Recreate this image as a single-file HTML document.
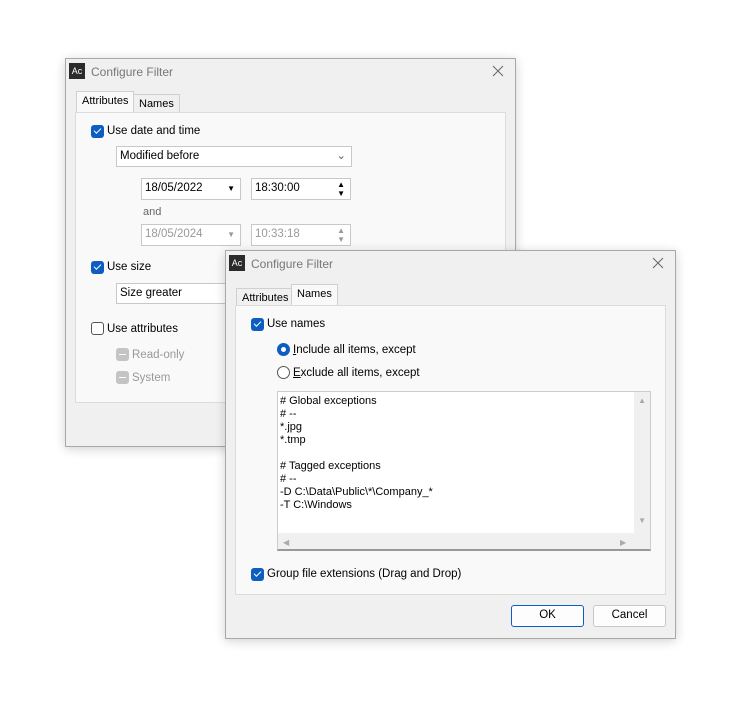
<!DOCTYPE html>
<html><head><style>
*{box-sizing:border-box}
body{margin:0;width:734px;height:703px;background:#fff;position:relative;font-family:"Liberation Sans",sans-serif;font-size:11px;color:#000;overflow:hidden}
.a{position:absolute}
.dlg{position:absolute;background:#f0f0f0;border:1px solid #a8a8a8;box-shadow:0 2px 10px rgba(0,0,0,.18)}
.ttl{position:absolute;left:25px;top:6px;font-size:12px;color:#777}
.ico{position:absolute;left:3px;top:4px;width:16px;height:16px;background:#2b2b2b;color:#fff;font-size:9px;line-height:16px;text-align:center}
.x{position:absolute;right:11px;top:6px}
.page{position:absolute;background:#f9f9f9;border:1px solid #dcdcdc}
.tab{position:absolute;border:1px solid #d0d0d0;border-bottom:none;background:#f0f0f0;height:19px;line-height:18px;padding:0 5px}
.tab.on{background:#f9f9f9;height:22px}
.cb{position:absolute;width:13px;height:13px;border-radius:3px;background:#0c5fc0}
.cb:after{content:"";position:absolute;left:3px;top:3px;width:6px;height:3px;border-left:1.3px solid #fff;border-bottom:1.3px solid #fff;transform:rotate(-45deg)}
.cbe{position:absolute;width:13px;height:13px;border-radius:3px;border:1px solid #555;background:#fff}
.cbd{position:absolute;width:13px;height:13px;border-radius:3px;background:#c4c4c4}
.cbd:after{content:"";position:absolute;left:3px;top:6px;width:7px;height:1px;background:#fff}
.box{position:absolute;background:#fff;border:1px solid #c8c8c8;padding-left:3px;line-height:19px;font-size:11.5px}
.g{color:#999}
.btn{position:absolute;background:#fdfdfd;border:1px solid #c8c8c8;border-radius:3px;text-align:center;line-height:19px;font-size:11.5px}
</style></head><body>

<div class="dlg" style="left:65px;top:58px;width:451px;height:389px">
 <div class="ico">Ac</div><div class="ttl">Configure Filter</div>
 <svg class="x" width="12" height="12"><path d="M1 1L11 11M11 1L1 11" stroke="#666" stroke-width="1"/></svg>
 <div class="tab on" style="left:10px;top:32px">Attributes</div>
 <div class="tab" style="left:67px;top:35px;height:18px">Names</div>
 <div class="page" style="left:9px;top:53px;width:431px;height:291px"></div>
 <div class="cb" style="left:25px;top:66px"></div><div class="a" style="left:41px;top:66px;font-size:11.5px">Use date and time</div>
 <div class="box" style="left:50px;top:87px;width:236px;height:21px">Modified before<span class="a" style="right:5px;top:0;color:#666">&#8964;</span></div>
 <div class="box" style="left:75px;top:119px;width:100px;height:22px">18/05/2022<span class="a" style="right:5px;top:0;font-size:8px">▼</span></div>
 <div class="box" style="left:185px;top:119px;width:100px;height:22px">18:30:00<span class="a" style="right:5px;top:-1px;font-size:8px;line-height:9px;padding-top:2px">▲<br>▼</span></div>
 <div class="a" style="left:77px;top:147px;color:#666">and</div>
 <div class="box g" style="left:75px;top:165px;width:100px;height:22px">18/05/2024<span class="a" style="right:5px;top:0;font-size:8px">▼</span></div>
 <div class="box g" style="left:185px;top:165px;width:100px;height:22px">10:33:18<span class="a" style="right:5px;top:-1px;font-size:8px;line-height:9px;padding-top:2px">▲<br>▼</span></div>
 <div class="cb" style="left:25px;top:202px"></div><div class="a" style="left:41px;top:202px;font-size:11.5px">Use size</div>
 <div class="box" style="left:50px;top:224px;width:120px;height:21px">Size greater</div>
 <div class="cbe" style="left:25px;top:263px"></div><div class="a" style="left:41px;top:264px;font-size:11.5px">Use attributes</div>
 <div class="cbd" style="left:50px;top:289px"></div><div class="a g" style="left:66px;top:290px;font-size:11.5px">Read-only</div>
 <div class="cbd" style="left:50px;top:312px"></div><div class="a g" style="left:66px;top:313px;font-size:11.5px">System</div>
</div>

<div class="dlg" style="left:225px;top:250px;width:451px;height:389px">
 <div class="ico">Ac</div><div class="ttl">Configure Filter</div>
 <svg class="x" width="12" height="12"><path d="M1 1L11 11M11 1L1 11" stroke="#666" stroke-width="1"/></svg>
 <div class="tab" style="left:10px;top:37px;height:18px">Attributes</div>
 <div class="tab on" style="left:65px;top:33px">Names</div>
 <div class="page" style="left:9px;top:54px;width:431px;height:290px"></div>
 <div class="cb" style="left:25px;top:67px"></div><div class="a" style="left:41px;top:67px;font-size:11.5px">Use names</div>
 <div class="a" style="left:51px;top:92px;width:13px;height:13px;border-radius:50%;background:#0c5fc0"><div class="a" style="left:4px;top:4px;width:5px;height:5px;border-radius:50%;background:#fff"></div></div>
 <div class="a" style="left:67px;top:93px;font-size:11.5px"><u>I</u>nclude all items, except</div>
 <div class="a" style="left:51px;top:115px;width:13px;height:13px;border-radius:50%;border:1px solid #555;background:#fff"></div>
 <div class="a" style="left:67px;top:116px;font-size:11.5px"><u>E</u>xclude all items, except</div>
 <div class="a" style="left:51px;top:140px;width:374px;height:160px;background:#fff;border:1px solid #ccc;border-bottom:2px solid #999">
  <div class="a" style="left:2px;top:3px;line-height:13px;font-size:11px">
  # Global exceptions<br># --<br>*.jpg<br>*.tmp<br><br># Tagged exceptions<br># --<br>-D C:\Data\Public\*\Company_*<br>-T C:\Windows</div>
  <div class="a" style="right:0;top:0;width:16px;height:141px;background:#f0f0f0"></div>
  <div class="a" style="left:0;bottom:0;width:356px;height:16px;background:#f0f0f0"></div>
  <div class="a" style="right:0;bottom:0;width:16px;height:16px;background:#f0f0f0"></div>
  <div class="a" style="right:4px;top:4px;font-size:8px;color:#aaa">▲</div>
  <div class="a" style="right:4px;top:124px;font-size:8px;color:#aaa">▼</div>
  <div class="a" style="left:5px;bottom:2px;font-size:8px;color:#aaa">◀</div>
  <div class="a" style="left:342px;bottom:2px;font-size:8px;color:#aaa">▶</div>
 </div>
 <div class="cb" style="left:25px;top:317px"></div><div class="a" style="left:41px;top:317px;font-size:11.5px">Group file extensions (Drag and Drop)</div>
 <div class="btn" style="left:285px;top:354px;width:73px;height:22px;border:1px solid #0c5fc0">OK</div>
 <div class="btn" style="left:367px;top:354px;width:73px;height:22px">Cancel</div>
</div>
</body></html>
